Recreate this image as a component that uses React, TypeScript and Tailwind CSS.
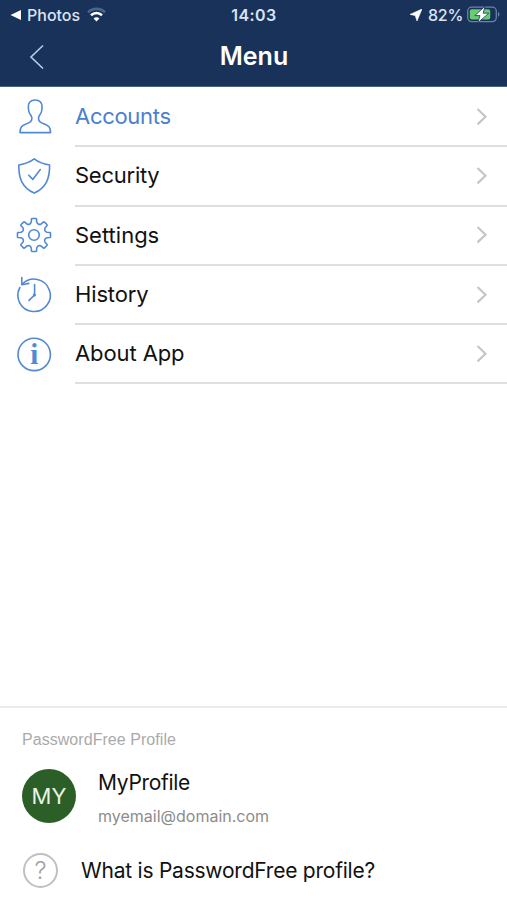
import React from 'react';

// Outline of the eight-tooth cog, built tooth by tooth around the centre
const cogPath = () => {
  const at = (r: number, deg: number) => {
    const a = (deg * Math.PI) / 180;
    return `${(18 + r * Math.sin(a)).toFixed(2)} ${(18 - r * Math.cos(a)).toFixed(2)}`;
  };
  let d = `M${at(13.2, -12)}`;
  for (let i = 0; i < 8; i++) {
    const t = i * 45;
    d += `L${at(16.2, t - 9)}Q${at(16.7, t - 8)} ${at(16.6, t - 6)}L${at(16.6, t + 6)}Q${at(16.7, t + 8)} ${at(16.2, t + 9)}`;
    d += `L${at(13.2, t + 12)}Q${at(10.4, t + 22.5)} ${at(13.2, t + 33)}`;
  }
  return d + 'Z';
};

const Icon = ({ children }: { children: React.ReactNode }) => (
  <svg className="size-9 shrink-0 overflow-visible text-[#5289d6]" viewBox="0 0 36 36" fill="none" stroke="currentColor" strokeWidth="1.6" strokeLinecap="round" strokeLinejoin="round">
    {children}
  </svg>
);

const items = [
  {
    label: 'Accounts',
    style: 'text-[#4a80d0] tracking-[-0.3px]',
    icon: (
      <path d="M19.2 1C14.5 1 12 4 12.3 8.2C12.4 11 12.6 12.6 13.6 14.4C14.8 16.2 15.9 17 15.9 19.2C15.9 22.6 13.6 23.6 10 25C6 26.5 4 28.2 4 33.6H34.6C34.6 28.2 32.4 26.5 28.4 25C24.8 23.6 22.5 22.6 22.5 19.2C22.5 17 23.6 16.2 24.8 14.4C25.8 12.6 26 11 26.1 8.2C26.4 4 23.9 1 19.2 1Z" />
    ),
  },
  {
    label: 'Security',
    style: 'tracking-[-0.25px]',
    icon: (
      <>
        <path d="M18.2 0.9C14 4.2 8.8 6 2.8 7C2.6 20.5 6.2 29.6 18.2 35.1C30.2 29.6 33.8 20.5 33.6 7C27.6 6 22.4 4.2 18.2 0.9Z" />
        <path d="M12.8 17.2L16.8 21.4L24.3 11.6" />
      </>
    ),
  },
  {
    label: 'Settings',
    style: '',
    icon: (
      <>
        <path d={cogPath()} />
        <circle cx="18" cy="18" r="5.3" />
      </>
    ),
  },
  {
    label: 'History',
    style: 'tracking-[-0.15px]',
    icon: (
      <>
        <path d="M3.9 10.5A16.2 16.2 0 1 0 6.6 6.9" />
        <path d="M5.8 0.6V7.7L12.8 6.4" />
        <path d="M18.6 7.5V18L13 23.4" />
        <circle cx="18.4" cy="18" r="0.8" fill="currentColor" />
      </>
    ),
  },
  {
    label: 'About App',
    style: 'tracking-[-0.1px]',
    icon: (
      <>
        <circle cx="18.2" cy="18.4" r="16.2" />
        <text x="18.2" y="27.8" textAnchor="middle" fill="currentColor" stroke="none" className="font-['Liberation_Serif',serif] text-[29px] font-bold">i</text>
      </>
    ),
  },
];

const StatusBar = () => (
  <div className="grid h-[29px] grid-cols-3 items-center pr-[7px] pl-2.5 text-[16px] font-medium text-[#d9e4f5]">
    <div className="flex items-center">
      <svg className="h-2.5 w-[11px] text-white" viewBox="0 0 11 10" fill="currentColor">
        <path d="M0.5 5L11 0V10Z" />
      </svg>
      <span className="ml-1.5">Photos</span>
      <svg className="ml-[7px] h-[15px] w-[19px]" viewBox="0 0 19 15" fill="none" strokeWidth="2.6">
        <path d="M1 5.3C5.6 0.7 13.4 0.7 18 5.3" stroke="#49658f" />
        <path d="M4 8.2C7.2 5.2 11.8 5.2 15 8.2" stroke="#fff" />
        <path d="M6.6 11.4C8.2 9.8 10.8 9.8 12.4 11.4L9.5 14.4Z" fill="#fff" />
      </svg>
    </div>
    <span className="pr-0.5 text-center font-semibold tracking-[0.4px]">14:03</span>
    <div className="flex items-center justify-end">
      <svg className="mr-1.5 size-3 text-white" viewBox="0 0 12 12" fill="currentColor">
        <path d="M12 0L0 5.4L5.2 6.6L7 12Z" stroke="currentColor" strokeWidth="0.6" />
      </svg>
      <span className="tracking-[-0.3px]">82%</span>
      <svg className="ml-1 h-[17px] w-[33px]" viewBox="0 0 33 17">
        <rect x="0.7" y="1.2" width="28.6" height="14.4" rx="4" fill="none" stroke="#6d83a5" strokeWidth="1.3" />
        <rect x="2.8" y="3.3" width="20.4" height="10.2" rx="2" fill="#69cc70" />
        <path d="M31 5.8C33 7 33 9.8 31 11Z" fill="#6d83a5" />
        <path d="M18 0.2L7.8 9.6H13L10.8 16.8L21.8 7.2H16.2Z" fill="#fff" stroke="#19325a" strokeWidth="0.8" />
      </svg>
    </div>
  </div>
);

const App = () => {
  return (
    <div className="flex h-[900px] w-[507px] flex-col overflow-hidden bg-white font-['Inter',sans-serif] text-[#111]">
      <header className="h-[87px] border-b border-[#4b5f82] bg-[#19325a]">
        <StatusBar />
        <div className="grid h-[55px] grid-cols-3 items-center">
          <svg className="ml-[29px] h-[26px] w-4" viewBox="0 0 16 26" fill="none" stroke="#b9cdeb" strokeWidth="1.6">
            <path d="M14 1.5L2 13L14 24.5" />
          </svg>
          <h1 className="pl-px text-center text-[25px] font-semibold text-white">Menu</h1>
        </div>
      </header>

      <nav className="pt-px">
        {items.map(({ label, icon, style }) => (
          <a key={label} className="flex h-[59.3px] pl-4">
            <div className="flex items-center pb-[1.6px]">
              <Icon>{icon}</Icon>
            </div>
            <div className="ml-[23px] flex flex-1 items-center justify-between border-b-2 border-[#dfdfdf] pr-[19px]">
              <span className={`text-[22px] ${style}`}>{label}</span>
              <svg className="h-[18px] w-3" viewBox="0 0 12 18" fill="none" stroke="#c6c6c6" strokeWidth="2.2">
                <path d="M1.5 1L9.5 8.7L1.5 16.4" />
              </svg>
            </div>
          </a>
        ))}
      </nav>

      <footer className="mt-auto h-[194px] border-t-2 border-[#ebebeb] pl-[22px]">
        <p className="mt-5 font-['Liberation_Sans',sans-serif] text-[16px] leading-6 tracking-[0.05px] text-[#aaa]">PasswordFree Profile</p>
        <div className="mt-[17px] flex h-[54px] items-center">
          <div className="flex size-[54px] items-center justify-center rounded-full bg-[#2c5e27] text-[22px] text-[#e8f3e6]">MY</div>
          <div className="ml-[22px] flex flex-col pt-[3px]">
            <span className="text-[21px] leading-[26px] tracking-[-0.3px]">MyProfile</span>
            <span className="mt-2.5 text-[16px] leading-5 text-[#8c8c8c]">myemail@domain.com</span>
          </div>
        </div>
        <div className="mt-[30px] flex items-center pl-px">
          <div className="flex size-[35px] items-center justify-center rounded-full border-2 border-[#c0c0c0] text-[24px] font-light text-[#a0a0a0]">?</div>
          <span className="ml-[23px] pt-px text-[21px] tracking-[-0.23px]">What is PasswordFree profile?</span>
        </div>
      </footer>
    </div>
  );
};

export default App;
